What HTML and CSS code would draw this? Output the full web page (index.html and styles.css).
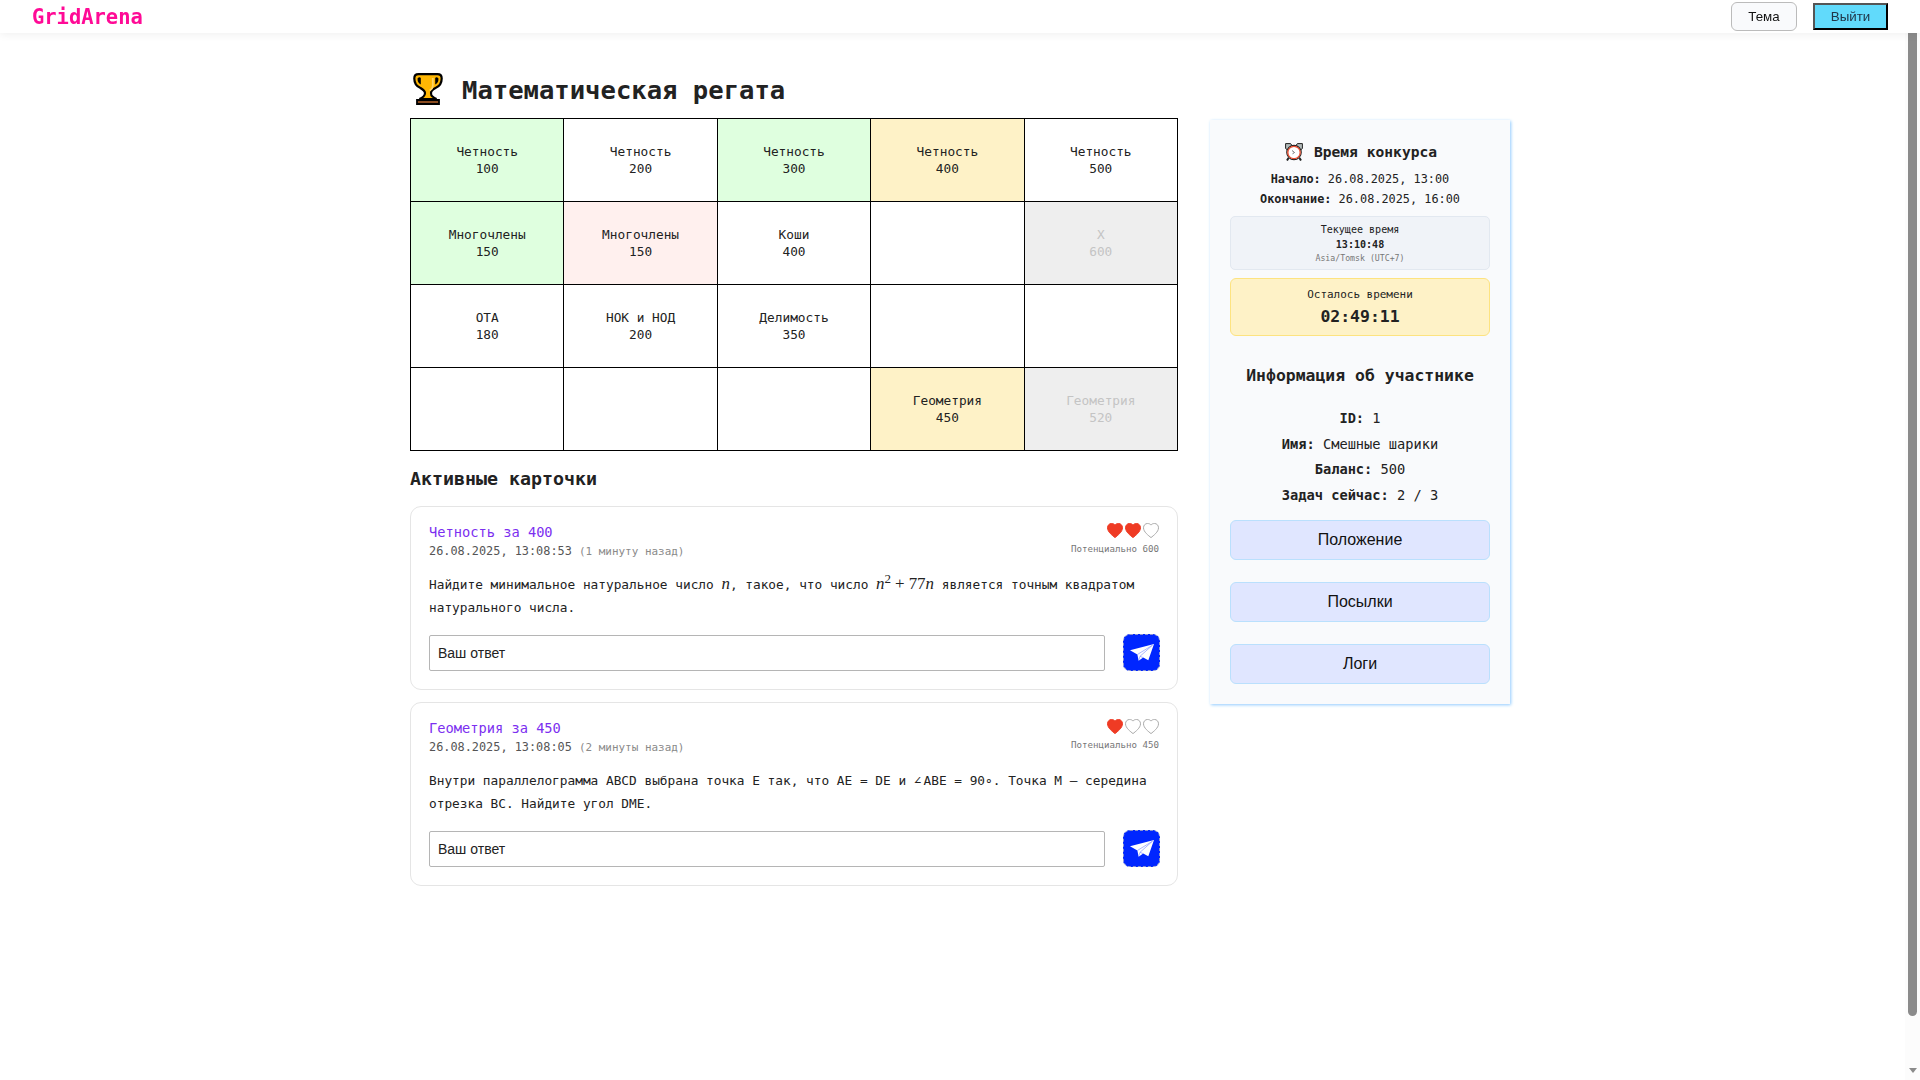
FILE: index.html
```html
<!DOCTYPE html>
<html lang="ru">
<head>
<meta charset="utf-8">
<title>GridArena</title>
<link rel="stylesheet" href="styles.css">
</head>
<body>
<svg class="defs" width="0" height="0" aria-hidden="true">
  <symbol id="heart" viewBox="0 0 16 15"><path d="M8 14.6C5.6 12.6.5 9 .5 4.8.5 2.2 2.4.5 4.4.5 6.1.5 7.3 1 8 2.1 8.7 1 9.900.5 11.600.5c2 0 3.900 1.700 3.900 4.300C15.500 9 10.400 12.600 8 14.600Z"/></symbol>
  <symbol id="plane" viewBox="0 0 24 17"><path fill="#fff" d="M0 6.300 24 0 18.300 16.200 13.200 13.600 8.600 16.800 7.400 10.500Z"/><path fill="none" stroke="#8797ff" stroke-width=".7" d="M7.400 10.500 22.500 1.200M10 12.300 22.500 1.200M8.800 16 10 12.300l3 1.300"/></symbol>
</svg>
<header class="topbar">
  <a class="logo">GridArena</a>
  <nav class="topbar-actions">
    <button class="btn-theme">Тема</button>
    <button class="btn-exit">Выйти</button>
  </nav>
</header>
<main class="page">
  <section class="content">
    <h1 class="title">
      <svg class="trophy" viewBox="0 0 30 32"><path d="M5.500 1.200h19Q28.700 1.200 28.700 5.500q0 7-6.200 9.500-4.500 2.200-4.500 5t1.500 3.500q1.500 1.300 4 2.500h-17q2.500-1.200 4-2.500T12 20t-4.500-5Q1.300 12.500 1.300 5.500 1.300 1.200 5.500 1.200Z" fill="#ffb703" stroke="#000" stroke-width="2.200"/><path d="M4.500 5.500Q6.500 3.300 7.800 5v6.500Q4.500 10 4.500 5.500ZM25.500 5.500Q23.500 3.300 22.200 5v6.500q3.300-1.500 3.300-6Z"/><path d="M19.800 5v8q0 2.500-3 4.500" fill="none" stroke="#ffd466" stroke-width="1.800"/><path d="M4 27h22v4H4Z" fill="#8a4b20" stroke="#000" stroke-width="1.800"/></svg>
      <span>Математическая регата</span>
    </h1>
    <div class="grid">
      <div class="cell solved"><span>Четность</span><span>100</span></div>
      <div class="cell"><span>Четность</span><span>200</span></div>
      <div class="cell solved"><span>Четность</span><span>300</span></div>
      <div class="cell active"><span>Четность</span><span>400</span></div>
      <div class="cell"><span>Четность</span><span>500</span></div>
      <div class="cell solved"><span>Многочлены</span><span>150</span></div>
      <div class="cell failed"><span>Многочлены</span><span>150</span></div>
      <div class="cell"><span>Коши</span><span>400</span></div>
      <div class="cell"></div>
      <div class="cell locked"><span>Х</span><span>600</span></div>
      <div class="cell"><span>ОТА</span><span>180</span></div>
      <div class="cell"><span>НОК и НОД</span><span>200</span></div>
      <div class="cell"><span>Делимость</span><span>350</span></div>
      <div class="cell"></div>
      <div class="cell"></div>
      <div class="cell"></div>
      <div class="cell"></div>
      <div class="cell"></div>
      <div class="cell active"><span>Геометрия</span><span>450</span></div>
      <div class="cell locked"><span>Геометрия</span><span>520</span></div>
    </div>
    <h2 class="subtitle">Активные карточки</h2>
    <div class="cards">
      <article class="card">
        <div class="card-head">
          <div>
            <div class="card-title">Четность за 400</div>
            <div class="card-date">26.08.2025, 13:08:53 <span class="ago">(1 минуту назад)</span></div>
          </div>
          <div class="lives">
            <div class="hearts"><svg class="heart full"><use href="#heart"/></svg><svg class="heart full"><use href="#heart"/></svg><svg class="heart"><use href="#heart"/></svg></div>
            <div class="potential">Потенциально 600</div>
          </div>
        </div>
        <p class="task">Найдите минимальное натуральное число <span class="math"><i>n</i></span>, такое, что число <span class="math"><i>n</i><sup>2</sup><span class="op">+</span>77<i>n</i></span> является точным квадратом<br>натурального числа.</p>
        <form class="answer">
          <input class="field" placeholder="Ваш ответ">
          <button class="send" type="button"><svg class="plane"><use href="#plane"/></svg></button>
        </form>
      </article>
      <article class="card">
        <div class="card-head">
          <div>
            <div class="card-title">Геометрия за 450</div>
            <div class="card-date">26.08.2025, 13:08:05 <span class="ago">(2 минуты назад)</span></div>
          </div>
          <div class="lives">
            <div class="hearts"><svg class="heart full"><use href="#heart"/></svg><svg class="heart"><use href="#heart"/></svg><svg class="heart"><use href="#heart"/></svg></div>
            <div class="potential">Потенциально 450</div>
          </div>
        </div>
        <p class="task">Внутри параллелограмма ABCD выбрана точка E так, что AE = DE и <span class="angle">∠</span>ABE = 90∘. Точка M — середина<br>отрезка BC. Найдите угол DME.</p>
        <form class="answer">
          <input class="field" placeholder="Ваш ответ">
          <button class="send" type="button"><svg class="plane"><use href="#plane"/></svg></button>
        </form>
      </article>
    </div>
  </section>
  <aside class="side">
    <h3 class="side-time">
      <svg class="clock" viewBox="0 0 18 18"><path d="M3.500 15 2 17.500M14.500 15l1.500 2.500" stroke="#222" stroke-width="2"/><path d="M.6 5.500V.6h5L7 2.500 2.500 7ZM17.400 5.500V.6h-5L11 2.500 15.500 7Z" fill="#b4bcbc" stroke="#222" stroke-width="1"/><circle cx="9" cy="9.500" r="7.200" fill="#fff" stroke="#222" stroke-width="1.200"/><circle cx="9" cy="9.500" r="6.200" fill="#fff" stroke="#ea4a2c" stroke-width="1.300"/><path d="m7 7.500 2.500 2-2 1.300" fill="none" stroke="#555" stroke-width=".8"/></svg>
      <span>Время конкурса</span>
    </h3>
    <div class="period"><b>Начало:</b> 26.08.2025, 13:00</div>
    <div class="period"><b>Окончание:</b> 26.08.2025, 16:00</div>
    <div class="now">
      <div>Текущее время</div>
      <b>13:10:48</b>
      <div class="zone">Asia/Tomsk (UTC+7)</div>
    </div>
    <div class="left">
      <div>Осталось времени</div>
      <b>02:49:11</b>
    </div>
    <h3 class="side-info">Информация об участнике</h3>
    <div class="info">
      <div><b>ID:</b> 1</div>
      <div><b>Имя:</b> Смешные шарики</div>
      <div><b>Баланс:</b> 500</div>
      <div><b>Задач сейчас:</b> 2 / 3</div>
    </div>
    <div class="menu">
      <button>Положение</button>
      <button>Посылки</button>
      <button>Логи</button>
    </div>
  </aside>
</main>
<div class="scroll"><div class="scroll-thumb"></div><div class="scroll-arrow"></div></div>
</body>
</html>
```
FILE: styles.css
```css
* { box-sizing: border-box; }
html, body { margin: 0; height: 100%; overflow: hidden; }
body {
  background: #fff;
  color: #222;
  font-family: "DejaVu Sans Mono", "Liberation Mono", monospace;
  font-size: 12.79px;
}
h1, h2, h3, p { margin: 0; }
button, input { font-family: "Liberation Sans", Arial, sans-serif; }
.defs { display: block; height: 0; }

.topbar {
  display: flex;
  justify-content: space-between;
  align-items: center;
  height: 33px;
  padding: 0 32px;
  background: #fff;
  box-shadow: 0 2px 8px rgba(0, 0, 0, .06);
  position: relative;
  z-index: 2;
}
.logo { color: #ff0a96; font-size: 20.46px; font-weight: bold; line-height: 33px; padding-top: 1px; }
.topbar-actions { display: flex; align-items: center; gap: 16px; }
.btn-theme {
  width: 66px; height: 29px; padding: 0;
  border: 1px solid #bbb; border-radius: 6px;
  background: #f9fafc; color: #111; font-size: 13.33px;
}
.btn-exit {
  width: 75px; height: 27px; padding: 0;
  border: 2px solid; border-color: #555 #000 #000 #555;
  background: #61dafb; color: #213547; font-size: 13.33px;
}

.page { display: flex; gap: 32px; align-items: flex-start; padding: 29px 0 0 410px; }
.content { width: 768px; }
.title {
  display: flex; align-items: center; gap: 19px;
  height: 56px; padding-left: 3px;
  font-size: 25.57px; line-height: 56px;
}
.trophy { width: 30px; height: 32px; margin-bottom: 2px; }
.grid {
  display: grid;
  grid-template-columns: repeat(5, 1fr);
  grid-auto-rows: 82px;
  gap: 1px; padding: 1px;
  background: #000;
}
.cell {
  display: flex; flex-direction: column; align-items: center; justify-content: center;
  background: #fff; line-height: 17px;
}
.solved { background: #dfffdf; }
.active { background: #fef2c7; }
.failed { background: #fff0ee; }
.locked { background: #eee; color: #c4c4c4; }
.subtitle { font-size: 18.27px; line-height: 55px; }

.cards { display: flex; flex-direction: column; gap: 12px; }
.card { border: 1px solid #e5e5e5; border-radius: 11px; padding: 17px 18px 18px; height: 184px; background: #fff; }
.card-head { display: flex; justify-content: space-between; }
.card-title { color: #7c2ff0; font-size: 13.7px; line-height: 17px; }
.card-date { color: #555; font-size: 11.87px; line-height: 20px; height: 20px; }
.ago { color: #8a8a8a; font-size: 10.96px; line-height: 1; }
.lives { display: flex; flex-direction: column; align-items: flex-end; margin-top: -1px; }
.hearts { display: flex; gap: 2px; height: 15px; }
.heart { width: 16px; height: 15px; fill: #fff; stroke: #aaa; }
.heart.full { fill: #ef3b24; stroke: #ef3b24; }
.potential { color: #777; font-size: 9.13px; line-height: 12px; margin-top: 5px; }
.task { margin-top: 12px; line-height: 23px; white-space: nowrap; }
.math { font-family: "Liberation Serif", serif; font-size: 16.94px; line-height: 0; }
.math sup { font-size: 13px; line-height: 0; vertical-align: 6px; }
.op { margin: 0 4px; }
.angle { letter-spacing: 2px; }
.answer { display: flex; align-items: center; gap: 18px; height: 37px; margin: 15px -1px 0 0; }
.field {
  flex: 1; height: 36px; padding: 0 8px;
  border: 1px solid #b5b5b5; border-radius: 2px; background: #fff; font-size: 14px;
}
.field::placeholder { color: #222; opacity: 1; }
.send {
  display: flex; align-items: center; justify-content: center;
  width: 37px; height: 37px; padding: 0;
  border: 1px dashed #8a94d0; border-radius: 7px;
  background: #0026ff;
}
.plane { width: 24px; height: 17px; }

.side {
  display: flex; flex-direction: column;
  width: 300px; height: 584px; margin-top: 58px; padding: 21px 20px 20px;
  background: #f9fafc; text-align: center;
  box-shadow: 1px 1px 3px #90cbff;
}
.side-time { display: flex; align-items: center; justify-content: center; gap: 11px; padding-left: 2px; font-size: 14.61px; line-height: 22px; }
.clock { width: 18px; height: 18px; }
.period { font-size: 11.87px; line-height: 20px; }
.side-time + .period { margin-top: 6px; }
.now {
  height: 54px; margin-top: 7px; padding-top: 5px;
  border: 1px solid #e2e8f0; border-radius: 5px; background: #f0f3f8;
  font-size: 10.05px; line-height: 15px;
}
.now b, .left b { display: block; }
.zone { color: #777; font-size: 8.22px; line-height: 12px; }
.left {
  height: 58px; margin-top: 8px; padding-top: 8px;
  border: 1px solid #fde380; border-radius: 6px; background: #fef2c7;
  font-size: 10.96px; line-height: 16px;
}
.left b { font-size: 16.44px; line-height: 28px; }
.side-info { margin-top: 28px; font-size: 16.44px; line-height: 23px; }
.info { margin-top: 19px; font-size: 13.7px; line-height: 25.7px; }
.menu { display: flex; flex-direction: column; gap: 22px; margin-top: 11px; }
.menu button {
  height: 40px; padding: 0;
  border: 1px solid #bae0fd; border-radius: 6px; background: #e0e6ff; color: #111; font-size: 16px;
}

.scroll {
  position: fixed; top: 33px; right: 0; bottom: 0; width: 15px;
  display: flex; flex-direction: column; align-items: center; justify-content: space-between;
  padding-bottom: 7px; background: #fcfcfc;
}
.scroll-thumb { width: 9px; height: 983px; border-radius: 0 0 5px 5px; background: #8b8b8b; }
.scroll-arrow { border: 4.5px solid transparent; border-top: 5px solid #8b8b8b; border-bottom: 0; }
```
